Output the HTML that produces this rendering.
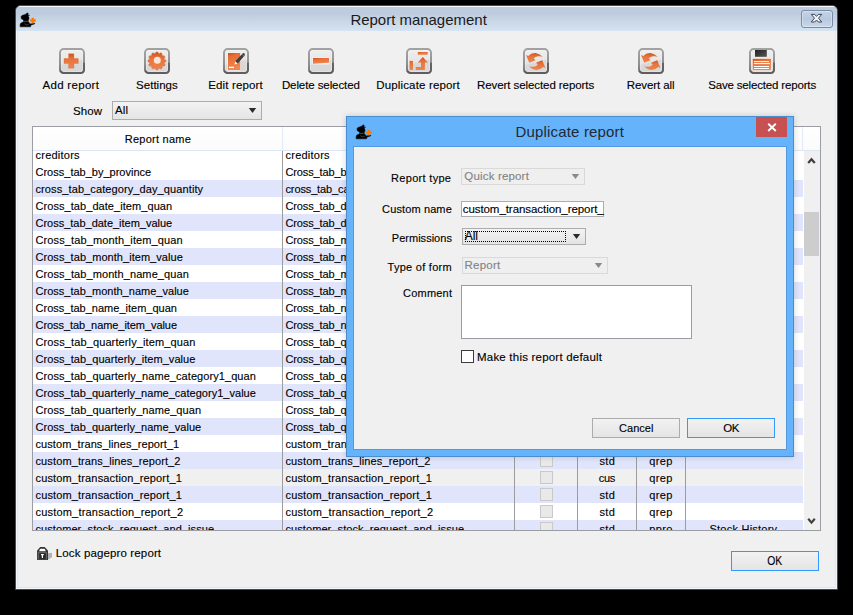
<!DOCTYPE html>
<html><head><meta charset="utf-8"><title>Report management</title>
<style>
*{box-sizing:border-box;margin:0;padding:0}
html,body{width:853px;height:615px;background:#000;overflow:hidden}
body{font-family:"Liberation Sans",sans-serif;font-size:11px;color:#000;position:relative;-webkit-text-stroke:0.13px}
.abs{position:absolute}
.t{position:absolute;white-space:pre;height:14px;line-height:14px;z-index:10}
#tbl .t{z-index:1}
#win{position:absolute;left:15px;top:5px;width:823px;height:585px;border:1px solid #4a4a4a;border-radius:6px 6px 0 0;background:#dbe7f5;overflow:hidden}
#wtitle{position:absolute;left:0;top:0;width:821px;height:25px;background:linear-gradient(#f6f9fc 0,#f6f9fc 1px,#becddd 1.5px,#becddd 30%,#d6e3f1 100%)}
#wbody{position:absolute;left:2px;top:25px;width:817px;height:556px;background:#f0f0f0}
#wfr{position:absolute;left:0;top:25px;width:821px;height:558px;border:1px solid #f2f7fc;border-top:none}
.title{position:absolute;font-size:15px;color:#1a1a1a;white-space:nowrap}
.ic{position:absolute;top:48px}
.tl{position:absolute;top:78px;height:14px;line-height:14px;text-align:center;white-space:nowrap;font-size:11px}
#tbl{z-index:0;position:absolute;left:32px;top:126px;width:789px;height:405px;border:1px solid #9a9da3;background:#fff;overflow:hidden}
#hdr{position:absolute;left:0;top:0;width:787px;height:24px;background:linear-gradient(#fff,#fbfbfb);border-bottom:1px solid #dbe6f7;z-index:3}
#hdr i{position:absolute;top:0;width:1px;height:23px;background:#e3ebf8}
.r{position:absolute;left:0;width:770px;height:17px;line-height:17px;white-space:nowrap}
.r span{position:absolute;top:1px;height:17px}
.c1{left:2px} .c2{left:252px}
.c4{left:546px;width:58px;text-align:center} .c5{left:605px;width:48px;text-align:center} .c6{left:654px;width:117px;text-align:center}
.cb{left:507px;top:2px !important;width:13px;height:13px !important;border:1px solid #c9c9c9;background:#e9e9e9}
.vl{position:absolute;top:24px;width:1px;height:380px;background:#9c9c9c;z-index:2}
#sb{position:absolute;left:770px;top:24px;width:17px;height:379px;background:#f0f0f0;border-left:1px solid #fff;z-index:2}
.btn{position:absolute;height:20px;border:1px solid #acacac;background:linear-gradient(#f2f2f2,#e4e4e4);text-align:center;line-height:18px;font-size:11px}
.btn.def{border-color:#3399ff}
.sel{position:absolute;border:1px solid #acacac;background:linear-gradient(#f3f3f3,#e4e4e4)}
.sel.dis{border-color:#d9d9d9;background:#efefef;color:#838383}
.sel b{position:absolute;font-weight:normal;white-space:nowrap}
.a8{border-left-width:4px !important;border-right-width:4px !important;border-top-width:4.5px !important}
.arr{position:absolute;width:0;height:0;border-left:3.5px solid transparent;border-right:3.5px solid transparent;border-top:4px solid #222}
#dlg{position:absolute;left:346px;top:116px;width:448px;height:341px;background:#65b3fb;border:1px solid #4a8ccc;box-shadow:0 0 6px rgba(0,0,0,0.18)}
#dbody{position:absolute;left:7px;top:30px;width:432px;height:302px;background:#f0f0f0;box-shadow:0 0 0 1px #5299e0}
.lb{position:absolute;white-space:nowrap;text-align:right;height:14px;line-height:14px}
</style></head><body>
<svg width="0" height="0" style="position:absolute">
<defs>
<linearGradient id="gbg" x1="0" y1="0" x2="0" y2="1"><stop offset="0" stop-color="#efefef"/><stop offset="0.5" stop-color="#e6e6e6"/><stop offset="1" stop-color="#dadada"/></linearGradient>
<linearGradient id="gbd" x1="0" y1="0" x2="0" y2="1"><stop offset="0" stop-color="#a2a2a2"/><stop offset="0.6" stop-color="#8c8c8c"/><stop offset="1" stop-color="#707070"/></linearGradient>
<linearGradient id="gor" x1="0" y1="0" x2="0" y2="1"><stop offset="0" stop-color="#c9541d"/><stop offset="0.35" stop-color="#e8733a"/><stop offset="1" stop-color="#ee8450"/></linearGradient>
<radialGradient id="gorr" cx="0.5" cy="0.6" r="0.6"><stop offset="0" stop-color="#f08a55"/><stop offset="0.7" stop-color="#e8733a"/><stop offset="1" stop-color="#c9541d"/></radialGradient>
<linearGradient id="gor2" x1="0" y1="0" x2="0.3" y2="1"><stop offset="0" stop-color="#c5511a"/><stop offset="0.25" stop-color="#e66d33"/><stop offset="1" stop-color="#ef8551"/></linearGradient>
<linearGradient id="gdk" x1="0" y1="0" x2="1" y2="1"><stop offset="0" stop-color="#222"/><stop offset="1" stop-color="#555"/></linearGradient>
</defs></svg>

<div id="win">
 <div id="wtitle"></div>
 <div id="wfr"></div>
 <div id="wbody"></div>
</div>
<svg class="abs" style="left:16px;top:8px" width="24" height="24" viewBox="0 0 24 24"><path d="M5.1 8.4 L5.9 7.6 L9.2 6.4 L11.3 4.9 L12.2 5.3 L11.9 7.0 L13.5 7.3 L11.9 7.8 L12.9 9.2 L12.9 11.3 L12.1 12.7 L12.5 14.3 L13.3 14.6 L13.9 15.9 L18.8 15.3 L18.6 15.9 L15.0 17.0 L14.5 18.8 L4.1 18.8 L4.2 16.4 L4.9 15.0 L7.4 14.1 L7.8 12.9 L7.2 11.7 L5.3 10.7Z" fill="#000" stroke="#000" stroke-width="0.5" stroke-linejoin="round"/>
<path d="M8 13.4 L11.6 13.4" stroke="#8c9199" stroke-width="0.5"/>
<path d="M8.3 15.6 Q10 17.6 12.6 16.4" stroke="#6a6f78" stroke-width="0.5" fill="none"/>
<path d="M15.9 10h1.9v1.6h1.6v1.9h-1.6v1.6h-1.9v-1.6h-1.6v-1.9h1.6z" fill="#ff7a00" stroke="#ff7a00" stroke-width="0.5" stroke-linejoin="round"/></svg>
<div class="abs" id="wclose" style="left:801px;top:10px;width:32px;height:18px;border:1px solid #7b8aa8;border-radius:3px;background:linear-gradient(#c4d3e6,#b7c8de 50%,#c9d8ea);box-shadow:inset 0 0 0 1px rgba(255,255,255,0.35)">
 <svg width="30" height="16" viewBox="0 0 30 16" style="position:absolute;left:0;top:0"><path d="M9.3 3.4 L12.7 3.4 L14.5 5.4 L16.3 3.4 L19.7 3.4 L16.5 7.2 L19.7 11 L16.3 11 L14.5 9 L12.7 11 L9.3 11 L12.5 7.2 Z" fill="#f4f4f4" stroke="#3e4658" stroke-width="1" stroke-linejoin="round"/></svg>
</div>

<svg class="ic" style="left:59px" width="26" height="26" viewBox="0 0 26 26">
<rect x="1" y="1" width="24" height="24" rx="3.6" ry="3.6" fill="url(#gbg)" stroke="url(#gbd)" stroke-width="1.9"/>
<path d="M2.2 17 L23.8 11.6 L23.8 21 Q23.8 23.8 21 23.8 L5 23.8 Q2.2 23.8 2.2 21 Z" fill="#d6d6d6" opacity="0.8"/>
<rect x="2.5" y="2.5" width="21" height="21" rx="2.3" fill="none" stroke="#f8f8f8" stroke-width="1" opacity="0.3"/>
<path d="M25 14.8 V21.4 Q25 25 21.4 25 H4.6 Q2 25 1.3 22.6" fill="none" stroke="#5a5a5a" stroke-width="1.9" opacity="0.85"/>
<path d="M9.6 5.8 H14.9 V10.5 H19.3 V15.5 H14.9 V20.2 H9.6 V15.5 H5 V10.5 H9.6 Z" fill="url(#gor)" stroke="#d05f28" stroke-width="0.3"/></svg>
<svg class="ic" style="left:144px" width="26" height="26" viewBox="0 0 26 26">
<rect x="1" y="1" width="24" height="24" rx="3.6" ry="3.6" fill="url(#gbg)" stroke="url(#gbd)" stroke-width="1.9"/>
<path d="M2.2 17 L23.8 11.6 L23.8 21 Q23.8 23.8 21 23.8 L5 23.8 Q2.2 23.8 2.2 21 Z" fill="#d6d6d6" opacity="0.8"/>
<rect x="2.5" y="2.5" width="21" height="21" rx="2.3" fill="none" stroke="#f8f8f8" stroke-width="1" opacity="0.3"/>
<path d="M25 14.8 V21.4 Q25 25 21.4 25 H4.6 Q2 25 1.3 22.6" fill="none" stroke="#5a5a5a" stroke-width="1.9" opacity="0.85"/>
<path d="M11.97 4.05 L13.83 4.05 L14.26 5.32 L15.51 5.66 L16.52 4.77 L18.13 5.70 L17.87 7.02 L18.78 7.93 L20.10 7.67 L21.03 9.28 L20.14 10.29 L20.48 11.54 L21.75 11.97 L21.75 13.83 L20.48 14.26 L20.14 15.51 L21.03 16.52 L20.10 18.13 L18.78 17.87 L17.87 18.78 L18.13 20.10 L16.52 21.03 L15.51 20.14 L14.26 20.48 L13.83 21.75 L11.97 21.75 L11.54 20.48 L10.29 20.14 L9.28 21.03 L7.67 20.10 L7.93 18.78 L7.02 17.87 L5.70 18.13 L4.77 16.52 L5.66 15.51 L5.32 14.26 L4.05 13.83 L4.05 11.97 L5.32 11.54 L5.66 10.29 L4.77 9.28 L5.70 7.67 L7.02 7.93 L7.93 7.02 L7.67 5.70 L9.28 4.77 L10.29 5.66 L11.54 5.32Z" fill="url(#gor)" stroke="#d4622b" stroke-width="0.5" stroke-linejoin="round"/><circle cx="13.3" cy="12.3" r="3.5" fill="#fbe3d6"/></svg>
<svg class="ic" style="left:223px" width="26" height="26" viewBox="0 0 26 26">
<rect x="1" y="1" width="24" height="24" rx="3.6" ry="3.6" fill="url(#gbg)" stroke="url(#gbd)" stroke-width="1.9"/>
<path d="M2.2 17 L23.8 11.6 L23.8 21 Q23.8 23.8 21 23.8 L5 23.8 Q2.2 23.8 2.2 21 Z" fill="#d6d6d6" opacity="0.8"/>
<rect x="2.5" y="2.5" width="21" height="21" rx="2.3" fill="none" stroke="#f8f8f8" stroke-width="1" opacity="0.3"/>
<path d="M25 14.8 V21.4 Q25 25 21.4 25 H4.6 Q2 25 1.3 22.6" fill="none" stroke="#5a5a5a" stroke-width="1.9" opacity="0.85"/>
<rect x="4.5" y="4.5" width="13" height="18" fill="#f4f4f4"/><rect x="5" y="5" width="12.2" height="17" fill="url(#gor2)"/><rect x="6" y="18.7" width="5" height="1.4" fill="#fff"/><path d="M11.4 16.4 L12.3 13.2 L14.8 15.6 Z" fill="#fff"/><path d="M12.3 13.2 L19.6 5.4 Q20.6 4.7 21.5 5.6 Q22.3 6.6 21.6 7.5 L14.8 15.6 Z" fill="#3d3d3d"/><path d="M19 6.1 L21.2 8.2" stroke="#8a8a8a" stroke-width="0.7"/></svg>
<svg class="ic" style="left:308px" width="26" height="26" viewBox="0 0 26 26">
<rect x="1" y="1" width="24" height="24" rx="3.6" ry="3.6" fill="url(#gbg)" stroke="url(#gbd)" stroke-width="1.9"/>
<path d="M2.2 17 L23.8 11.6 L23.8 21 Q23.8 23.8 21 23.8 L5 23.8 Q2.2 23.8 2.2 21 Z" fill="#d6d6d6" opacity="0.8"/>
<rect x="2.5" y="2.5" width="21" height="21" rx="2.3" fill="none" stroke="#f8f8f8" stroke-width="1" opacity="0.3"/>
<path d="M25 14.8 V21.4 Q25 25 21.4 25 H4.6 Q2 25 1.3 22.6" fill="none" stroke="#5a5a5a" stroke-width="1.9" opacity="0.85"/>
<rect x="4.4" y="9.4" width="17" height="7" fill="#f4f4f4"/><path d="M5 10 H21 V14.8 L5 15.8 Z" fill="url(#gor2)"/></svg>
<svg class="ic" style="left:406px" width="26" height="26" viewBox="0 0 26 26">
<rect x="1" y="1" width="24" height="24" rx="3.6" ry="3.6" fill="url(#gbg)" stroke="url(#gbd)" stroke-width="1.9"/>
<path d="M2.2 17 L23.8 11.6 L23.8 21 Q23.8 23.8 21 23.8 L5 23.8 Q2.2 23.8 2.2 21 Z" fill="#d6d6d6" opacity="0.8"/>
<rect x="2.5" y="2.5" width="21" height="21" rx="2.3" fill="none" stroke="#f8f8f8" stroke-width="1" opacity="0.3"/>
<path d="M25 14.8 V21.4 Q25 25 21.4 25 H4.6 Q2 25 1.3 22.6" fill="none" stroke="#5a5a5a" stroke-width="1.9" opacity="0.85"/>
<rect x="11.8" y="4" width="10" height="2.8" fill="url(#gor2)"/><rect x="3.6" y="12.9" width="3.4" height="9.1" fill="url(#gor2)"/><path d="M16.8 9 L21.9 14.6 H18.9 V22 H9.8 V19.1 H15 V14.6 H11.8 Z" fill="url(#gor)"/></svg>
<svg class="ic" style="left:523px" width="26" height="26" viewBox="0 0 26 26">
<rect x="1" y="1" width="24" height="24" rx="3.6" ry="3.6" fill="url(#gbg)" stroke="url(#gbd)" stroke-width="1.9"/>
<path d="M2.2 17 L23.8 11.6 L23.8 21 Q23.8 23.8 21 23.8 L5 23.8 Q2.2 23.8 2.2 21 Z" fill="#d6d6d6" opacity="0.8"/>
<rect x="2.5" y="2.5" width="21" height="21" rx="2.3" fill="none" stroke="#f8f8f8" stroke-width="1" opacity="0.3"/>
<path d="M25 14.8 V21.4 Q25 25 21.4 25 H4.6 Q2 25 1.3 22.6" fill="none" stroke="#5a5a5a" stroke-width="1.9" opacity="0.85"/>
<path d="M19.73 8.78 Q16.51 5.56 12.41 5.09 Q8.02 4.98 5.27 8.02 L3.04 7.03 L6.26 14.64 L12.41 12.30 L10.77 10.36 Q12.41 8.61 15.34 8.20 Q17.68 8.02 19.73 8.78Z" fill="url(#gor)"/><path d="M5.77 18.22 Q8.99 21.44 13.09 21.91 Q17.48 22.02 20.23 18.98 L22.46 19.97 L19.24 12.36 L13.09 14.70 L14.73 16.64 Q13.09 18.39 10.16 18.80 Q7.82 18.98 5.77 18.22Z" fill="url(#gor)"/></svg>
<svg class="ic" style="left:638px" width="26" height="26" viewBox="0 0 26 26">
<rect x="1" y="1" width="24" height="24" rx="3.6" ry="3.6" fill="url(#gbg)" stroke="url(#gbd)" stroke-width="1.9"/>
<path d="M2.2 17 L23.8 11.6 L23.8 21 Q23.8 23.8 21 23.8 L5 23.8 Q2.2 23.8 2.2 21 Z" fill="#d6d6d6" opacity="0.8"/>
<rect x="2.5" y="2.5" width="21" height="21" rx="2.3" fill="none" stroke="#f8f8f8" stroke-width="1" opacity="0.3"/>
<path d="M25 14.8 V21.4 Q25 25 21.4 25 H4.6 Q2 25 1.3 22.6" fill="none" stroke="#5a5a5a" stroke-width="1.9" opacity="0.85"/>
<path d="M19.73 8.78 Q16.51 5.56 12.41 5.09 Q8.02 4.98 5.27 8.02 L3.04 7.03 L6.26 14.64 L12.41 12.30 L10.77 10.36 Q12.41 8.61 15.34 8.20 Q17.68 8.02 19.73 8.78Z" fill="url(#gor)"/><path d="M5.77 18.22 Q8.99 21.44 13.09 21.91 Q17.48 22.02 20.23 18.98 L22.46 19.97 L19.24 12.36 L13.09 14.70 L14.73 16.64 Q13.09 18.39 10.16 18.80 Q7.82 18.98 5.77 18.22Z" fill="url(#gor)"/></svg>
<svg class="ic" style="left:749px" width="26" height="26" viewBox="0 0 26 26">
<rect x="1" y="1" width="24" height="24" rx="3.6" ry="3.6" fill="url(#gbg)" stroke="url(#gbd)" stroke-width="1.9"/>
<path d="M2.2 17 L23.8 11.6 L23.8 21 Q23.8 23.8 21 23.8 L5 23.8 Q2.2 23.8 2.2 21 Z" fill="#d6d6d6" opacity="0.8"/>
<rect x="2.5" y="2.5" width="21" height="21" rx="2.3" fill="none" stroke="#f8f8f8" stroke-width="1" opacity="0.3"/>
<path d="M25 14.8 V21.4 Q25 25 21.4 25 H4.6 Q2 25 1.3 22.6" fill="none" stroke="#5a5a5a" stroke-width="1.9" opacity="0.85"/>
<rect x="6" y="2" width="11.8" height="6.8" fill="url(#gdk)"/><rect x="3.2" y="10.3" width="19.2" height="12.4" fill="#f7f7f7"/><rect x="3.7" y="10.8" width="18.2" height="11.4" fill="url(#gor2)"/><rect x="5" y="13.1" width="15" height="1" fill="#fff"/><rect x="5" y="15.1" width="16" height="1" fill="#fff"/><rect x="5" y="18" width="15" height="1" fill="#fff"/><rect x="5" y="20" width="15" height="1" fill="#fff"/></svg>
<span class="t" id="t1" style="left:350.4px;top:12.64px;font-size:15px;letter-spacing:-0.021px;color:#1a1a1a;-webkit-text-stroke:0">Report management</span>
<span class="t" id="t2" style="left:515.5px;top:125.04px;font-size:15px;letter-spacing:0.169px;color:#1f2a36;-webkit-text-stroke:0">Duplicate report</span>
<span class="t" id="tl0" style="left:42.5px;top:78.20px;font-size:11.5px;letter-spacing:0.300px;color:#000;">Add report</span>
<span class="t" id="tl1" style="left:136.1px;top:78.20px;font-size:11.5px;letter-spacing:0.017px;color:#000;">Settings</span>
<span class="t" id="tl2" style="left:208.2px;top:78.20px;font-size:11.5px;letter-spacing:0.149px;color:#000;">Edit report</span>
<span class="t" id="tl3" style="left:281.9px;top:78.20px;font-size:11.5px;letter-spacing:-0.092px;color:#000;">Delete selected</span>
<span class="t" id="tl4" style="left:376.2px;top:78.20px;font-size:11.5px;letter-spacing:0.157px;color:#000;">Duplicate report</span>
<span class="t" id="tl5" style="left:477.0px;top:78.20px;font-size:11.5px;letter-spacing:-0.078px;color:#000;">Revert selected reports</span>
<span class="t" id="tl6" style="left:626.8px;top:78.20px;font-size:11.5px;letter-spacing:-0.088px;color:#000;">Revert all</span>
<span class="t" id="tl7" style="left:708.2px;top:78.20px;font-size:11.5px;letter-spacing:-0.164px;color:#000;">Save selected reports</span>
<span class="t" id="showl" style="left:72.9px;top:103.70px;font-size:11.5px;letter-spacing:0.155px;color:#000;">Show</span>
<span class="t" id="showv" style="left:115.0px;top:103.20px;font-size:11.5px;letter-spacing:0.106px;color:#000;">All</span>
<span class="t" id="hname" style="left:124.8px;top:132.36px;font-size:11px;letter-spacing:0.246px;color:#000;">Report name</span>
<span class="t" id="lockl" style="left:55.8px;top:546.20px;font-size:11.5px;letter-spacing:0.130px;color:#000;">Lock pagepro report</span>
<span class="t" id="l1" style="left:391.1px;top:171.36px;font-size:11px;letter-spacing:0.302px;color:#000;">Report type</span>
<span class="t" id="l2" style="left:382.1px;top:202.36px;font-size:11px;letter-spacing:0.120px;color:#000;">Custom name</span>
<span class="t" id="l3" style="left:391.8px;top:231.06px;font-size:11px;letter-spacing:0.018px;color:#000;">Permissions</span>
<span class="t" id="l4" style="left:387.6px;top:260.06px;font-size:11px;letter-spacing:0.263px;color:#000;">Type of form</span>
<span class="t" id="l5" style="left:403.1px;top:286.36px;font-size:11px;letter-spacing:0.202px;color:#000;">Comment</span>
<span class="t" id="l6" style="left:477.0px;top:349.80px;font-size:11.5px;letter-spacing:0.210px;color:#000;">Make this report default</span>
<span class="t" id="cancel" style="left:619.0px;top:421.36px;font-size:11px;letter-spacing:0.042px;color:#000;">Cancel</span>
<span class="t" id="ok2" style="left:723.3px;top:421.20px;font-size:11.5px;letter-spacing:-0.612px;color:#000;">OK</span>
<span class="t" id="v1" style="left:464.3px;top:169.20px;font-size:11.5px;letter-spacing:0.172px;color:#838383;">Quick report</span>
<span class="t" id="v2" style="left:462.7px;top:202.20px;font-size:11.5px;letter-spacing:-0.060px;color:#000;">custom_transaction_report_</span>
<span class="t" id="v3" style="left:464.8px;top:229.03px;font-size:12px;letter-spacing:-0.048px;color:#000;">All</span>
<span class="t" id="v4" style="left:464.6px;top:258.20px;font-size:11.5px;letter-spacing:0.211px;color:#838383;">Report</span>

<div class="sel" style="left:112px;top:101px;width:150px;height:19px"></div>

<div id="tbl">
 <div id="hdr"><i style="left:249px"></i><i style="left:481px"></i><i style="left:544px"></i><i style="left:603px"></i><i style="left:652px"></i><i style="left:769px"></i></div>
 <div class="r" style="top:19px;background:#fff"><span class="cb"></span></div>
<div class="r" style="top:36px;background:#fff"><span class="cb"></span></div>
<div class="r" style="top:53px;background:#e1e5fb"><span class="cb"></span></div>
<div class="r" style="top:70px;background:#fff"><span class="cb"></span></div>
<div class="r" style="top:87px;background:#e1e5fb"><span class="cb"></span></div>
<div class="r" style="top:104px;background:#fff"><span class="cb"></span></div>
<div class="r" style="top:121px;background:#e1e5fb"><span class="cb"></span></div>
<div class="r" style="top:138px;background:#fff"><span class="cb"></span></div>
<div class="r" style="top:155px;background:#e1e5fb"><span class="cb"></span></div>
<div class="r" style="top:172px;background:#fff"><span class="cb"></span></div>
<div class="r" style="top:189px;background:#e1e5fb"><span class="cb"></span></div>
<div class="r" style="top:206px;background:#fff"><span class="cb"></span></div>
<div class="r" style="top:223px;background:#e1e5fb"><span class="cb"></span></div>
<div class="r" style="top:240px;background:#fff"><span class="cb"></span></div>
<div class="r" style="top:257px;background:#e1e5fb"><span class="cb"></span></div>
<div class="r" style="top:274px;background:#fff"><span class="cb"></span></div>
<div class="r" style="top:291px;background:#e1e5fb"><span class="cb"></span></div>
<div class="r" style="top:308px;background:#fff"><span class="cb"></span></div>
<div class="r" style="top:325px;background:#e1e5fb"><span class="cb"></span></div>
<div class="r" style="top:342px;background:#f0f0f0"><span class="cb"></span></div>
<div class="r" style="top:359px;background:#e1e5fb"><span class="cb"></span></div>
<div class="r" style="top:376px;background:#fff"><span class="cb"></span></div>
<div class="r" style="top:393px;background:#e1e5fb"><span class="cb"></span></div>
 <span class="t" id="ra0" style="left:2.5px;top:21.36px;font-size:11px;letter-spacing:0.235px;color:#000;">creditors</span>
<span class="t" id="rb0" style="left:252.5px;top:21.36px;font-size:11px;letter-spacing:0.235px;color:#000;">creditors</span>
<span class="t" id="ra1" style="left:2.5px;top:38.36px;font-size:11px;letter-spacing:0.006px;color:#000;">Cross_tab_by_province</span>
<span class="t" id="rb1" style="left:252.5px;top:38.36px;font-size:11px;letter-spacing:0.000px;color:#000;letter-spacing:-0.13px">Cross_tab_by_province</span>
<span class="t" id="ra2" style="left:2.5px;top:55.36px;font-size:11px;letter-spacing:0.103px;color:#000;">cross_tab_category_day_quantity</span>
<span class="t" id="rb2" style="left:252.5px;top:55.36px;font-size:11px;letter-spacing:0.000px;color:#000;letter-spacing:-0.13px">cross_tab_category_day_quantity</span>
<span class="t" id="ra3" style="left:2.5px;top:72.36px;font-size:11px;letter-spacing:0.064px;color:#000;">Cross_tab_date_item_quan</span>
<span class="t" id="rb3" style="left:252.5px;top:72.36px;font-size:11px;letter-spacing:0.000px;color:#000;letter-spacing:-0.13px">Cross_tab_date_item_quan</span>
<span class="t" id="ra4" style="left:2.5px;top:89.36px;font-size:11px;letter-spacing:-0.011px;color:#000;">Cross_tab_date_item_value</span>
<span class="t" id="rb4" style="left:252.5px;top:89.36px;font-size:11px;letter-spacing:0.000px;color:#000;letter-spacing:-0.13px">Cross_tab_date_item_value</span>
<span class="t" id="ra5" style="left:2.5px;top:106.36px;font-size:11px;letter-spacing:0.120px;color:#000;">Cross_tab_month_item_quan</span>
<span class="t" id="rb5" style="left:252.5px;top:106.36px;font-size:11px;letter-spacing:0.000px;color:#000;letter-spacing:-0.13px">Cross_tab_month_item_quan</span>
<span class="t" id="ra6" style="left:2.5px;top:123.36px;font-size:11px;letter-spacing:0.045px;color:#000;">Cross_tab_month_item_value</span>
<span class="t" id="rb6" style="left:252.5px;top:123.36px;font-size:11px;letter-spacing:0.000px;color:#000;letter-spacing:-0.13px">Cross_tab_month_item_value</span>
<span class="t" id="ra7" style="left:2.5px;top:140.36px;font-size:11px;letter-spacing:0.094px;color:#000;">Cross_tab_month_name_quan</span>
<span class="t" id="rb7" style="left:252.5px;top:140.36px;font-size:11px;letter-spacing:0.000px;color:#000;letter-spacing:-0.13px">Cross_tab_month_name_quan</span>
<span class="t" id="ra8" style="left:2.5px;top:157.36px;font-size:11px;letter-spacing:0.020px;color:#000;">Cross_tab_month_name_value</span>
<span class="t" id="rb8" style="left:252.5px;top:157.36px;font-size:11px;letter-spacing:0.000px;color:#000;letter-spacing:-0.13px">Cross_tab_month_name_value</span>
<span class="t" id="ra9" style="left:2.5px;top:174.36px;font-size:11px;letter-spacing:0.010px;color:#000;">Cross_tab_name_item_quan</span>
<span class="t" id="rb9" style="left:252.5px;top:174.36px;font-size:11px;letter-spacing:0.000px;color:#000;letter-spacing:-0.13px">Cross_tab_name_item_quan</span>
<span class="t" id="ra10" style="left:2.5px;top:191.36px;font-size:11px;letter-spacing:-0.064px;color:#000;">Cross_tab_name_item_value</span>
<span class="t" id="rb10" style="left:252.5px;top:191.36px;font-size:11px;letter-spacing:0.000px;color:#000;letter-spacing:-0.13px">Cross_tab_name_item_value</span>
<span class="t" id="ra11" style="left:2.5px;top:208.36px;font-size:11px;letter-spacing:0.116px;color:#000;">Cross_tab_quarterly_item_quan</span>
<span class="t" id="rb11" style="left:252.5px;top:208.36px;font-size:11px;letter-spacing:0.000px;color:#000;letter-spacing:-0.13px">Cross_tab_quarterly_item_quan</span>
<span class="t" id="ra12" style="left:2.5px;top:225.36px;font-size:11px;letter-spacing:0.051px;color:#000;">Cross_tab_quarterly_item_value</span>
<span class="t" id="rb12" style="left:252.5px;top:225.36px;font-size:11px;letter-spacing:0.000px;color:#000;letter-spacing:-0.13px">Cross_tab_quarterly_item_value</span>
<span class="t" id="ra13" style="left:2.5px;top:242.36px;font-size:11px;letter-spacing:0.069px;color:#000;">Cross_tab_quarterly_name_category1_quan</span>
<span class="t" id="rb13" style="left:252.5px;top:242.36px;font-size:11px;letter-spacing:0.000px;color:#000;letter-spacing:-0.13px">Cross_tab_quarterly_name_category1_quan</span>
<span class="t" id="ra14" style="left:2.5px;top:259.36px;font-size:11px;letter-spacing:0.022px;color:#000;">Cross_tab_quarterly_name_category1_value</span>
<span class="t" id="rb14" style="left:252.5px;top:259.36px;font-size:11px;letter-spacing:0.000px;color:#000;letter-spacing:-0.13px">Cross_tab_quarterly_name_category1_value</span>
<span class="t" id="ra15" style="left:2.5px;top:276.36px;font-size:11px;letter-spacing:0.083px;color:#000;">Cross_tab_quarterly_name_quan</span>
<span class="t" id="rb15" style="left:252.5px;top:276.36px;font-size:11px;letter-spacing:0.000px;color:#000;letter-spacing:-0.13px">Cross_tab_quarterly_name_quan</span>
<span class="t" id="ra16" style="left:2.5px;top:293.36px;font-size:11px;letter-spacing:0.020px;color:#000;">Cross_tab_quarterly_name_value</span>
<span class="t" id="rb16" style="left:252.5px;top:293.36px;font-size:11px;letter-spacing:0.000px;color:#000;letter-spacing:-0.13px">Cross_tab_quarterly_name_value</span>
<span class="t" id="ra17" style="left:2.5px;top:310.36px;font-size:11px;letter-spacing:0.072px;color:#000;">custom_trans_lines_report_1</span>
<span class="t" id="rb17" style="left:252.5px;top:310.36px;font-size:11px;letter-spacing:0.072px;color:#000;">custom_trans_lines_report_1</span>
<span class="t" id="rc17" style="left:566.5px;top:310.36px;font-size:11px;letter-spacing:0.304px;color:#000;">std</span>
<span class="t" id="rd17" style="left:616.3px;top:310.36px;font-size:11px;letter-spacing:0.342px;color:#000;">qrep</span>
<span class="t" id="ra18" style="left:2.5px;top:327.36px;font-size:11px;letter-spacing:0.120px;color:#000;">custom_trans_lines_report_2</span>
<span class="t" id="rb18" style="left:252.5px;top:327.36px;font-size:11px;letter-spacing:0.120px;color:#000;">custom_trans_lines_report_2</span>
<span class="t" id="rc18" style="left:566.5px;top:327.36px;font-size:11px;letter-spacing:0.304px;color:#000;">std</span>
<span class="t" id="rd18" style="left:616.3px;top:327.36px;font-size:11px;letter-spacing:0.342px;color:#000;">qrep</span>
<span class="t" id="ra19" style="left:2.5px;top:344.36px;font-size:11px;letter-spacing:0.146px;color:#000;">custom_transaction_report_1</span>
<span class="t" id="rb19" style="left:252.5px;top:344.36px;font-size:11px;letter-spacing:0.146px;color:#000;">custom_transaction_report_1</span>
<span class="t" id="rc19" style="left:565.8px;top:344.36px;font-size:11px;letter-spacing:-0.275px;color:#000;">cus</span>
<span class="t" id="rd19" style="left:616.3px;top:344.36px;font-size:11px;letter-spacing:0.342px;color:#000;">qrep</span>
<span class="t" id="ra20" style="left:2.5px;top:361.36px;font-size:11px;letter-spacing:0.146px;color:#000;">custom_transaction_report_1</span>
<span class="t" id="rb20" style="left:252.5px;top:361.36px;font-size:11px;letter-spacing:0.146px;color:#000;">custom_transaction_report_1</span>
<span class="t" id="rc20" style="left:566.5px;top:361.36px;font-size:11px;letter-spacing:0.304px;color:#000;">std</span>
<span class="t" id="rd20" style="left:616.3px;top:361.36px;font-size:11px;letter-spacing:0.342px;color:#000;">qrep</span>
<span class="t" id="ra21" style="left:2.5px;top:378.36px;font-size:11px;letter-spacing:0.194px;color:#000;">custom_transaction_report_2</span>
<span class="t" id="rb21" style="left:252.5px;top:378.36px;font-size:11px;letter-spacing:0.194px;color:#000;">custom_transaction_report_2</span>
<span class="t" id="rc21" style="left:566.5px;top:378.36px;font-size:11px;letter-spacing:0.304px;color:#000;">std</span>
<span class="t" id="rd21" style="left:616.3px;top:378.36px;font-size:11px;letter-spacing:0.342px;color:#000;">qrep</span>
<span class="t" id="ra22" style="left:2.5px;top:395.36px;font-size:11px;letter-spacing:0.078px;color:#000;">customer_stock_request_and_issue</span>
<span class="t" id="rb22" style="left:252.5px;top:395.36px;font-size:11px;letter-spacing:0.078px;color:#000;">customer_stock_request_and_issue</span>
<span class="t" id="rc22" style="left:566.5px;top:395.36px;font-size:11px;letter-spacing:0.304px;color:#000;">std</span>
<span class="t" id="rd22" style="left:616.3px;top:395.36px;font-size:11px;letter-spacing:0.342px;color:#000;">ppro</span>
<span class="t" id="re22" style="left:676.5px;top:395.36px;font-size:11px;letter-spacing:0.231px;color:#000;">Stock History</span>
 <div class="vl" style="left:249px"></div><div class="vl" style="left:481px"></div><div class="vl" style="left:544px"></div><div class="vl" style="left:603px"></div><div class="vl" style="left:652px"></div>
 <div id="sb">
  <svg width="15" height="379" style="position:absolute;left:0;top:0"><path d="M4.2 12 L7.5 8.2 L10.8 12" fill="none" stroke="#404040" stroke-width="2.2"/><rect x="0" y="61" width="15" height="44" fill="#cdcdcd"/><path d="M4.2 367.8 L7.5 371.6 L10.8 367.8" fill="none" stroke="#404040" stroke-width="2.2"/></svg>
 </div>
</div>

<svg class="abs" style="left:36px;top:546px" width="18" height="16" viewBox="0 0 18 16">
<path d="M12 7.2 L16 6.8 V11.2 L12 13.6Z" fill="#b2b2b2"/>
<path d="M4.2 1 H8.6 L12 4.4 V14 H1.1 V4.4 Z" fill="#333"/>
<path d="M3.2 5.2 Q3.5 2.8 4.8 2.8 H8 Q9.3 2.8 9.7 5.2 Z" fill="#fff"/>
<rect x="2.1" y="5.9" width="8.9" height="7.6" fill="#636363"/>
<rect x="3.2" y="7.1" width="6.7" height="6.1" fill="#2b2b2b"/>
<path d="M5 8.1 H7.8 V9.2 H7 V12 H5.8 V9.2 H5Z" fill="#fff"/>
</svg>
<div class="btn def" style="left:731px;top:551px;width:88px"><span id="ok1" style="display:inline-block;font-size:12px;transform:scaleX(0.86)">OK</span></div>

<div id="dlg">
 <div id="dbody"></div>
</div>
<svg class="abs" style="left:352px;top:120px" width="24" height="24" viewBox="0 0 24 24"><path d="M5.1 8.4 L5.9 7.6 L9.2 6.4 L11.3 4.9 L12.2 5.3 L11.9 7.0 L13.5 7.3 L11.9 7.8 L12.9 9.2 L12.9 11.3 L12.1 12.7 L12.5 14.3 L13.3 14.6 L13.9 15.9 L18.8 15.3 L18.6 15.9 L15.0 17.0 L14.5 18.8 L4.1 18.8 L4.2 16.4 L4.9 15.0 L7.4 14.1 L7.8 12.9 L7.2 11.7 L5.3 10.7Z" fill="#000" stroke="#000" stroke-width="0.5" stroke-linejoin="round"/>
<path d="M8 13.4 L11.6 13.4" stroke="#8c9199" stroke-width="0.5"/>
<path d="M8.3 15.6 Q10 17.6 12.6 16.4" stroke="#6a6f78" stroke-width="0.5" fill="none"/>
<path d="M15.9 10h1.9v1.6h1.6v1.9h-1.6v1.6h-1.9v-1.6h-1.6v-1.9h1.6z" fill="#ff7a00" stroke="#ff7a00" stroke-width="0.5" stroke-linejoin="round"/></svg>
<div class="abs" style="left:756px;top:117px;width:31px;height:20px;background:#c75050">
 <svg width="31" height="20" style="position:absolute;left:0;top:0"><path d="M12.2 6.8 L19.8 14 M19.8 6.8 L12.2 14" stroke="#fff" stroke-width="1.9"/></svg>
</div>

<div class="sel dis" style="left:461px;top:168px;width:124px;height:17px"></div>
<div class="abs" style="left:461px;top:201px;width:143px;height:16px;border:1px solid #abadb3;background:#fff"></div>
<div class="sel" style="left:462px;top:228px;width:124px;height:17px">
 <span class="abs" style="left:2px;top:2px;width:101px;height:11px;border:1px dotted #000"></span></div>
<div class="sel dis" style="left:462px;top:257px;width:146px;height:17px"></div>
<div class="abs" style="left:461px;top:285px;width:231px;height:54px;border:1px solid #9a9ca3;background:#fff"></div>
<div class="abs" style="left:461px;top:350px;width:13px;height:13px;border:1px solid #3c3c3c;background:#fff"></div>
<div class="btn" style="left:592px;top:418px;width:88px"></div>
<div class="btn def" style="left:687px;top:418px;width:88px"></div>
<svg class="abs" style="left:0;top:0;z-index:11;pointer-events:none" width="853" height="615">
<polygon points="248.8,108 256.2,108 252.5,112.9" fill="#2b2b2b"/>
<polygon points="571.7,174 579.2,174 575.45,179" fill="#8a8a8a"/>
<polygon points="572.9,234 580.2,234 576.55,239" fill="#2b2b2b"/>
<polygon points="594.8,263 602.2,263 598.5,268" fill="#8a8a8a"/>
</svg>
</body></html>
